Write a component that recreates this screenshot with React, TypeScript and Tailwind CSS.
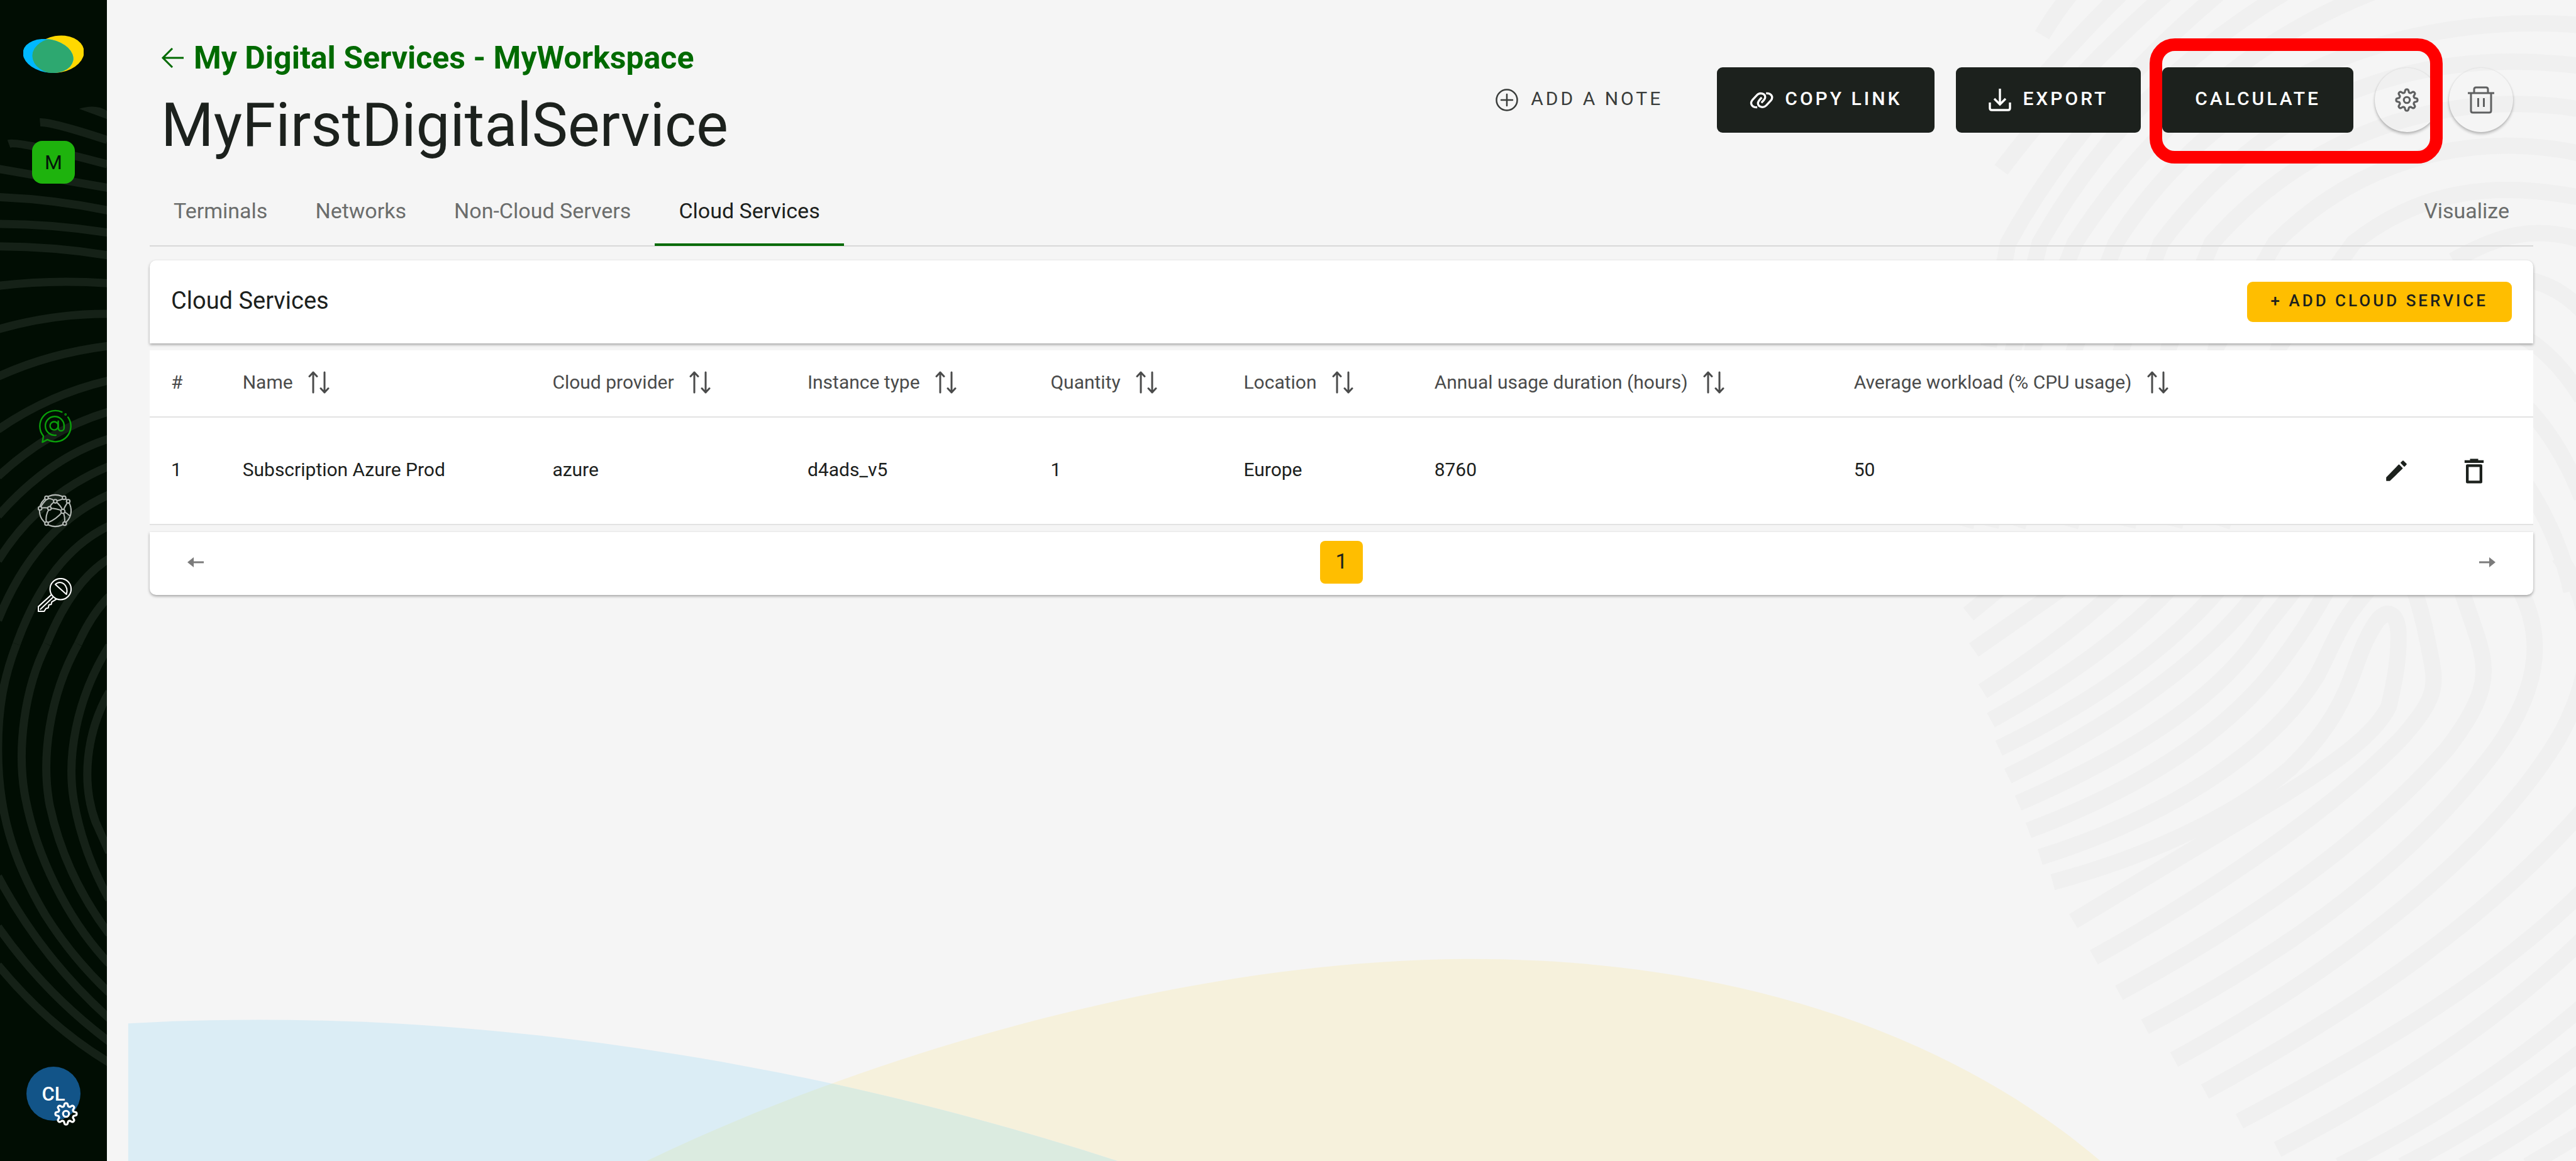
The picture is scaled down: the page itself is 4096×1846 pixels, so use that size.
import type { ReactNode } from "react";

type IconProps = { className?: string };

const gearPath = (() => {
  const teeth = 8;
  const steps = 96;
  const points: string[] = [];
  for (let i = 0; i < steps; i++) {
    const angle = (i / steps) * Math.PI * 2;
    const wave = Math.cos(angle * teeth);
    const radius = 9.2 + 1.6 * Math.tanh(wave * 1.8);
    const x = 12 + radius * Math.sin(angle);
    const y = 12 - radius * Math.cos(angle);
    points.push(`${x.toFixed(2)} ${y.toFixed(2)}`);
  }
  return `M${points.join("L")}Z`;
})();

function GearIcon({ className }: IconProps) {
  return (
    <svg viewBox="0 0 24 24" className={className} fill="none" stroke="currentColor" strokeWidth="2" strokeLinejoin="round" aria-hidden="true">
      <path d={gearPath} />
      <circle cx="12" cy="12" r="3" />
    </svg>
  );
}

function LogoIcon({ className }: IconProps) {
  return (
    <svg viewBox="0 0 102 68" className={className} aria-hidden="true">
      <defs>
        <clipPath id="logo-clip">
          <ellipse cx="59" cy="33" rx="44" ry="31" transform="rotate(-10 59 33)" />
        </clipPath>
      </defs>
      <ellipse cx="59" cy="33" rx="44" ry="31" transform="rotate(-10 59 33)" fill="#ffd800" />
      <ellipse cx="42" cy="36" rx="43" ry="28" transform="rotate(11 42 36)" fill="#00b8ff" />
      <ellipse cx="42" cy="36" rx="43" ry="28" transform="rotate(11 42 36)" fill="#2da870" clipPath="url(#logo-clip)" />
    </svg>
  );
}

function ContactIcon({ className }: IconProps) {
  return (
    <svg viewBox="0 0 58 58" className={className} fill="none" stroke="currentColor" strokeWidth="2.600" strokeLinecap="round" strokeLinejoin="round" aria-hidden="true">
      <path d="M41.200 4.500A26.500 26.500 0 0 0 9.700 45.500L8 56L16.700 51.500A26.500 26.500 0 0 0 51.700 13.300" />
      <circle cx="47.500" cy="8.500" r="0.700" />
      <path d="M31 44A16 16 0 1 1 45 28V31A5 5 0 0 1 35 32V20" />
      <circle cx="28" cy="28" r="7" />
    </svg>
  );
}

function GlobeIcon({ className }: IconProps) {
  return (
    <svg viewBox="0 0 58 58" className={className} fill="none" stroke="currentColor" strokeWidth="2.200" aria-hidden="true">
      <circle cx="30" cy="29" r="27" />
      <path d="M17 8Q24 8 30 13Q38 11 45 8M30 13Q22 17 20 25Q12 38 15 50M30 13Q40 20 43 30Q47 40 46 50M4 25Q12 23 20 25Q34 25 43 30Q50 33 55 38M43 30Q46 22 52 13M43 30Q32 44 16 50M4 25Q8 16 17 8" />
      <g fill="#010d03">
        <circle cx="15" cy="7" r="3" />
        <circle cx="45" cy="7" r="3" />
        <circle cx="52" cy="13" r="3" />
        <circle cx="30" cy="13" r="3" />
        <circle cx="4" cy="25" r="3" />
        <circle cx="20" cy="25" r="3" />
        <circle cx="43" cy="30" r="3.500" />
        <circle cx="15" cy="51" r="3" />
        <circle cx="46" cy="51" r="3" />
      </g>
    </svg>
  );
}

function KeyIcon({ className }: IconProps) {
  return (
    <svg viewBox="0 0 58 58" className={className} fill="none" stroke="currentColor" strokeWidth="2.200" strokeLinejoin="round" aria-hidden="true">
      <circle cx="39" cy="19" r="18" />
      <path d="M30 11C40 1 54 14 49 28Z" />
      <path d="M24 28L1 49V57H11L14 52L18 51L19 46L23 45L24 41L32 36" />
      <path d="M26 33L4 54" />
    </svg>
  );
}

function BackArrowIcon({ className }: IconProps) {
  return (
    <svg viewBox="0 0 36 32" className={className} fill="none" stroke="currentColor" strokeWidth="3" aria-hidden="true">
      <path d="M36 16H3M18 1L3 16L18 31" />
    </svg>
  );
}

function AddCircleIcon({ className }: IconProps) {
  return (
    <svg viewBox="0 0 36 36" className={className} fill="none" stroke="currentColor" strokeWidth="2.500" strokeLinecap="round" aria-hidden="true">
      <circle cx="18" cy="18" r="16.500" />
      <path d="M18 9V27M9 18H27" />
    </svg>
  );
}

function LinkIcon({ className }: IconProps) {
  return (
    <svg viewBox="58 74 126 90" className={className} fill="none" stroke="currentColor" strokeWidth="11" aria-hidden="true">
      <path d="M98 156C70 158 58 135 72 118L96 92C112 74 142 84 140 104C139 114 130 122 120 132" />
      <path d="M145 82C172 80 184 100 172 118L146 146C128 164 100 152 102 132C104 122 112 114 122 104" />
    </svg>
  );
}

function DownloadIcon({ className }: IconProps) {
  return (
    <svg viewBox="0 0 36 36" className={className} fill="none" stroke="currentColor" strokeWidth="3.400" aria-hidden="true">
      <path d="M18 0V24M9 16L18 25L27 16" />
      <path d="M2 22V31Q2 34 5 34H31Q34 34 34 31V22" />
    </svg>
  );
}

function TrashBarsIcon({ className }: IconProps) {
  return (
    <svg viewBox="0 0 42 44" className={className} fill="none" stroke="currentColor" strokeWidth="3" strokeLinejoin="round" aria-hidden="true">
      <path d="M0 11H42M10 11V5Q10 2 13 2H29Q32 2 32 5V11" />
      <path d="M5 11V39Q5 42 8 42H34Q37 42 37 39V11" />
      <path d="M16.500 19V33M25.500 19V33" />
    </svg>
  );
}

function SortIcon({ className }: IconProps) {
  return (
    <svg viewBox="0 0 34 36" className={className} fill="none" stroke="currentColor" strokeWidth="3" strokeLinecap="round" strokeLinejoin="round" aria-hidden="true">
      <path d="M8 34V2M2 8.500L8 2L14 8.500" />
      <path d="M26 2V34M20 27.500L26 34L32 27.500" />
    </svg>
  );
}

function PencilIcon({ className }: IconProps) {
  return (
    <svg viewBox="0 0 24 24" className={className} fill="currentColor" stroke="currentColor" strokeWidth="1" strokeLinejoin="round" aria-hidden="true">
      <path d="M3.800 17.800V20.200H6.200L16.800 9.900L14.100 7.200Z" />
      <path d="M16 5.300L17.600 3.800L20.200 6.400L18.700 8Z" />
    </svg>
  );
}

function TrashIcon({ className }: IconProps) {
  return (
    <svg viewBox="0 0 24 24" className={className} fill="none" stroke="currentColor" strokeWidth="2" strokeLinejoin="round" aria-hidden="true">
      <path d="M5 5H19M9 4H15" />
      <path d="M7 8H17V20H7Z" />
    </svg>
  );
}

function PagerArrowIcon({ className }: IconProps) {
  return (
    <svg viewBox="0 0 26 16" className={className} fill="none" stroke="currentColor" strokeWidth="3" aria-hidden="true">
      <path d="M26 8H4" />
      <path d="M0 8L10 0V16Z" fill="currentColor" stroke="none" />
    </svg>
  );
}

function SidebarPattern() {
  return (
    <svg viewBox="0 0 183 1983" preserveAspectRatio="xMinYMin slice" className="absolute inset-0 h-full w-full" fill="none" stroke="#152117" strokeWidth="13" aria-hidden="true">
      <g transform="scale(0.3333 0.7015)">
        {[
          "M205 298Q260 296 550 341",
          "M45 350Q90 342 550 400",
          "M-10 411L560 458",
          "M-10 480Q270 485 560 513",
          "M-10 545Q270 545 560 567",
          "M-10 600Q270 600 560 622",
          "M-10 696Q270 680 560 690",
          "M-10 802Q270 763 560 764",
          "M-10 917Q250 860 560 842",
          "M-10 1046Q250 960 560 926",
          "M-10 1160Q250 1045 560 1002",
          "M-10 1256Q250 1115 560 1068",
          "M-10 1365Q200 1205 560 1135",
          "M-10 1510Q180 1285 560 1204",
          "M85 1568Q250 1350 560 1280",
          "M240 1568Q370 1415 560 1360",
          "M400 1568Q470 1495 560 1452",
        ].map((d) => (
          <path key={d} d={d} vectorEffect="non-scaling-stroke" />
        ))}
        <path d="M405 265Q490 252 550 270V290Z" fill="#152117" stroke="none" />
      </g>
      <g transform="translate(0 1100) scale(0.3333 0.5631)">
        {[
          "M85 0C20 100 -10 190 -10 320C-10 500 60 650 230 820C320 905 430 985 560 1058",
          "M240 0C120 140 90 320 125 450C180 640 350 840 560 970",
          "M400 0C250 160 210 350 255 490C310 640 420 770 560 880",
          "M560 5C385 170 340 350 380 480C410 580 470 680 560 775",
          "M560 145C440 270 415 420 490 540L560 632",
          "M-10 705Q210 950 560 1136",
          "M-10 858Q230 1060 560 1206",
          "M-10 974Q250 1160 560 1270",
        ].map((d) => (
          <path key={d} d={d} vectorEffect="non-scaling-stroke" />
        ))}
      </g>
    </svg>
  );
}

function PageBackdrop() {
  return (
    <svg viewBox="0 0 4400 1983" preserveAspectRatio="xMaxYMax slice" className="absolute inset-0 h-full w-full" aria-hidden="true">
      <g fill="none" stroke="#f0f0f0" strokeWidth="28">
        {[
          "M3545 -20Q3515 15 3488 60",
          "M3632 -20Q3520 90 3440 190",
          "M3710 -20Q3530 140 3418 290",
          "M3800 -20Q3560 180 3430 415L3397 592",
          "M3915 -20Q3640 140 3484 415L3440 592L3357 900",
          "M4070 -20Q3750 100 3544 415L3473 592L3400 900",
          "M4410 43C4120 20 3800 120 3614 415L3545 592L3446 900",
          "M4410 113C4150 80 3890 150 3691 415L3625 592L3536 900",
          "M4410 187C4190 150 3950 220 3778 415L3705 592L3634 900",
          "M4410 263C4240 225 4040 260 3886 415L3786 592L3714 900",
          "M4410 338C4270 310 4140 320 4020 415L3893 592L3795 900",
          "M4410 410C4330 385 4270 400 4190 445",
          "M4300 475Q4360 480 4410 530",
          "M4300 570Q4360 600 4410 680",
          "M4310 690Q4370 750 4410 850",
          "M4310 820Q4370 910 4392 1010",
        ].map((d) => (
          <path key={d} d={d} />
        ))}
        <g transform="translate(3200 950) scale(0.7653 0.6588)" strokeWidth="26">
          {[
            "M212 150L285 80",
            "M224 243L425 80",
            "M244 350Q420 220 550 80",
            "M262 425Q520 260 665 80",
            "M280 498Q610 310 775 80",
            "M300 570Q700 340 865 80",
            "M323 640Q740 430 870 190Q910 130 945 80",
            "M346 711Q760 530 930 240Q985 150 1025 60",
            "M372 780C700 660 900 480 990 310C1030 220 1040 170 1110 80",
            "M400 845C640 770 820 660 930 550C1080 380 1060 280 1120 175C1145 130 1172 145 1172 210C1172 280 1160 340 1150 390C1120 460 1040 530 900 630L446 946",
            "M492 1040C800 840 1050 630 1180 470C1270 350 1255 330 1235 210Q1225 150 1205 80",
            "M548 1132C900 910 1130 700 1280 500C1380 350 1370 290 1345 200L1310 80",
            "M606 1220C950 1010 1210 780 1390 500C1500 320 1490 190 1440 80",
            "M671 1305C1060 1060 1380 760 1530 470C1620 280 1610 130 1530 0",
            "M740 1388C1100 1160 1380 930 1590 650",
            "M817 1465C1150 1260 1400 1080 1590 860",
            "M902 1538C1180 1370 1400 1200 1590 985",
            "M1040 1580Q1350 1400 1590 1160",
            "M1180 1580Q1400 1450 1590 1275",
            "M1315 1580Q1460 1490 1590 1375",
            "M1460 1580L1590 1490",
          ].map((d) => (
            <path key={d} d={d} vectorEffect="non-scaling-stroke" />
          ))}
        </g>
      </g>
      <defs>
        <path id="blob-blue" d="M219 1748C800 1715 1400 1815 1930 1990L219 1990Z" />
        <clipPath id="blob-clip">
          <use href="#blob-blue" />
        </clipPath>
        <path id="blob-yellow" d="M1090 1990C1500 1790 2050 1640 2500 1638C2950 1636 3330 1760 3596 1990Z" />
      </defs>
      <use href="#blob-yellow" fill="#f6f1dc" />
      <use href="#blob-blue" fill="#dbedf5" />
      <use href="#blob-yellow" fill="#dbebe0" clipPath="url(#blob-clip)" />
    </svg>
  );
}

function Sidebar() {
  return (
    <aside className="relative flex w-[170px] shrink-0 flex-col items-center bg-[#010d03] pb-16">
      <SidebarPattern />
      <a href="#home" aria-label="Home" className="relative mt-[55px]">
        <LogoIcon className="h-[64px] w-[96px]" />
      </a>
      <a
        href="#workspace"
        className="relative mt-[105px] flex size-[68px] items-center justify-center rounded-2xl bg-[#1eb30d] text-[32px] leading-none text-[#04140a]"
      >
        M
      </a>
      <nav aria-label="Services" className="relative mt-[359px] flex flex-col items-center gap-20 pl-1 text-white">
        <a href="#digital-services" aria-label="Digital services" className="text-[#0a9e0a]">
          <ContactIcon className="size-[54px]" />
        </a>
        <a href="#information-systems" aria-label="Information systems" className="text-[#b5bab6]">
          <GlobeIcon className="size-[54px]" />
        </a>
        <a href="#administration" aria-label="Administration">
          <KeyIcon className="size-[54px]" />
        </a>
      </nav>
      <button
        type="button"
        className="relative mt-auto flex size-[86px] items-center justify-center rounded-full bg-[#125488] text-[31px] leading-none font-medium text-white"
      >
        CL
        <GearIcon className="absolute right-1 -bottom-2 size-[38px]" />
      </button>
    </aside>
  );
}

function PrimaryButton({ icon, children }: { icon?: ReactNode; children: ReactNode }) {
  return (
    <button type="button" className="flex h-[104px] items-center gap-[18px] rounded-[9px] bg-[#1c211d] px-[52px] text-[30px] leading-9 font-medium tracking-[4px] text-white">
      {icon}
      <span className="pb-1">{children}</span>
    </button>
  );
}

function RoundButton({ label, children }: { label: string; children: ReactNode }) {
  return (
    <button
      type="button"
      aria-label={label}
      className="flex size-[102px] items-center justify-center rounded-full text-[#5f6061] shadow-[0_3px_4px_rgba(0,0,0,0.25),0_0_3px_rgba(0,0,0,0.08)]"
    >
      {children}
    </button>
  );
}

function PageHeader() {
  return (
    <header className="flex h-[198px] items-center justify-between">
      <div className="flex flex-col gap-5 self-start pl-[18px]">
        <a href="#my-digital-services" className="flex items-center gap-4 text-[50px] leading-[64px] font-bold text-[#006a00]">
          <BackArrowIcon className="h-8 w-9" />
          My Digital Services - MyWorkspace
        </a>
        <h1 className="text-[96px] leading-[110px] text-[#1c211d]">MyFirstDigitalService</h1>
      </div>
      <div className="flex items-center gap-[34px] pr-8">
        <button type="button" className="flex h-[104px] items-center gap-5 px-[52px] text-[30px] leading-9 tracking-[4px] text-[#3a3d3b]">
          <AddCircleIcon className="size-9" />
          <span className="pb-1">ADD A NOTE</span>
        </button>
        <PrimaryButton icon={<LinkIcon className="h-[27px] w-[38px]" />}>COPY LINK</PrimaryButton>
        <PrimaryButton icon={<DownloadIcon className="size-9" />}>EXPORT</PrimaryButton>
        <div className="flex items-center gap-4">
          <div className="relative flex items-center gap-[34px]">
            <PrimaryButton>CALCULATE</PrimaryButton>
            <RoundButton label="Settings">
              <GearIcon className="size-[38px]" />
            </RoundButton>
            <div className="pointer-events-none absolute -top-[46px] -right-[6px] -bottom-[49px] -left-5 z-10 rounded-[40px] border-[20px] border-[#ff0000]" />
          </div>
          <RoundButton label="Delete">
            <TrashBarsIcon className="h-[44px] w-[42px]" />
          </RoundButton>
        </div>
      </div>
    </header>
  );
}

const tabs = ["Terminals", "Networks", "Non-Cloud Servers", "Cloud Services"];

function Tabs() {
  return (
    <nav aria-label="Service sections" className="mt-6 flex h-[110px] border-b-2 border-[#d8d8d8] text-[34px] leading-10 text-[#6b6d6c]">
      {tabs.map((tab) => (
        <a
          key={tab}
          href={`#${tab}`}
          aria-current={tab === "Cloud Services" ? "page" : undefined}
          className="-mb-px flex items-center border-b-4 border-transparent px-[38px] aria-[current=page]:border-[#006a00] aria-[current=page]:text-[#1c211d]"
        >
          {tab}
        </a>
      ))}
      <a href="#visualize" className="-mb-px ml-auto flex items-center border-b-4 border-transparent px-[38px]">
        Visualize
      </a>
    </nav>
  );
}

const columns = [
  { label: "#", width: "w-[3%]", sortable: false },
  { label: "Name", width: "w-[13%]", sortable: true },
  { label: "Cloud provider", width: "w-[10.7%]", sortable: true },
  { label: "Instance type", width: "w-[10.2%]", sortable: true },
  { label: "Quantity", width: "w-[8.1%]", sortable: true },
  { label: "Location", width: "w-[8%]", sortable: true },
  { label: "Annual usage duration (hours)", width: "w-[17.6%]", sortable: true },
  { label: "Average workload (% CPU usage)", width: "w-[17.4%]", sortable: true },
];

const services = [["1", "Subscription Azure Prod", "azure", "d4ads_v5", "1", "Europe", "8760", "50"]];

function CloudServicesTable() {
  return (
    <table className="w-full table-fixed bg-white text-left text-[30px] leading-9 text-[#1c211d]">
      <thead>
        <tr className="h-[106px] border-b-2 border-[#e2e2e2] text-[#4a4b4b]">
          {columns.map((column) => (
            <th key={column.label} scope="col" className={`${column.width} pb-1 pl-[34px] font-normal whitespace-nowrap`}>
              {column.sortable ? (
                <button type="button" className="flex items-center gap-6">
                  {column.label}
                  <SortIcon className="h-9 w-[34px]" />
                </button>
              ) : (
                column.label
              )}
            </th>
          ))}
          <th scope="col" aria-label="Actions" />
        </tr>
      </thead>
      <tbody>
        {services.map((row) => (
          <tr key={row[1]} className="h-[171px] border-b-2 border-[#e2e2e2]">
            {row.map((value, index) => (
              <td key={columns[index].label} className="pb-1 pl-[34px] whitespace-nowrap">
                {value}
              </td>
            ))}
            <td className="pr-17">
              <div className="flex items-center justify-end gap-[75px]">
                <button type="button" aria-label="Edit">
                  <PencilIcon className="size-[45px]" />
                </button>
                <button type="button" aria-label="Delete">
                  <TrashIcon className="size-[52px]" />
                </button>
              </div>
            </td>
          </tr>
        ))}
      </tbody>
    </table>
  );
}

export default function App() {
  return (
    <div className="flex min-h-screen bg-[#f5f5f5] font-[Roboto,'Liberation_Sans',sans-serif]">
      <Sidebar />
      <div className="relative min-w-0 flex-1 overflow-hidden">
        <PageBackdrop />
        <main className="relative flex flex-col px-17 pt-15">
          <PageHeader />
          <Tabs />
          <section className="mt-[22px] flex flex-col gap-[11px]">
            <div className="flex h-[132px] items-center justify-between rounded-t-[10px] bg-white px-[34px] shadow-[0_2px_4px_rgba(0,0,0,0.35)]">
              <h2 className="pb-1 text-[38px] leading-[46px] text-[#1c211d]">Cloud Services</h2>
              <button type="button" className="h-16 rounded-[9px] bg-[#ffbe00] px-[38px] pb-1 text-[26px] leading-8 font-medium tracking-[4px] text-[#1c211d]">
                + ADD CLOUD SERVICE
              </button>
            </div>
            <CloudServicesTable />
            <nav aria-label="Pagination" className="flex h-[100px] items-center justify-between rounded-b-[10px] bg-white px-15 pb-1 text-[#7b7b7b] shadow-[0_2px_4px_rgba(0,0,0,0.35)]">
              <button type="button" aria-label="Previous page">
                <PagerArrowIcon className="h-4 w-[26px]" />
              </button>
              <button type="button" aria-current="page" className="size-[68px] rounded-lg bg-[#ffbe00] pb-1 text-[34px] leading-10 text-[#1c211d]">
                1
              </button>
              <button type="button" aria-label="Next page">
                <PagerArrowIcon className="h-4 w-[26px] rotate-180" />
              </button>
            </nav>
          </section>
        </main>
      </div>
    </div>
  );
}
